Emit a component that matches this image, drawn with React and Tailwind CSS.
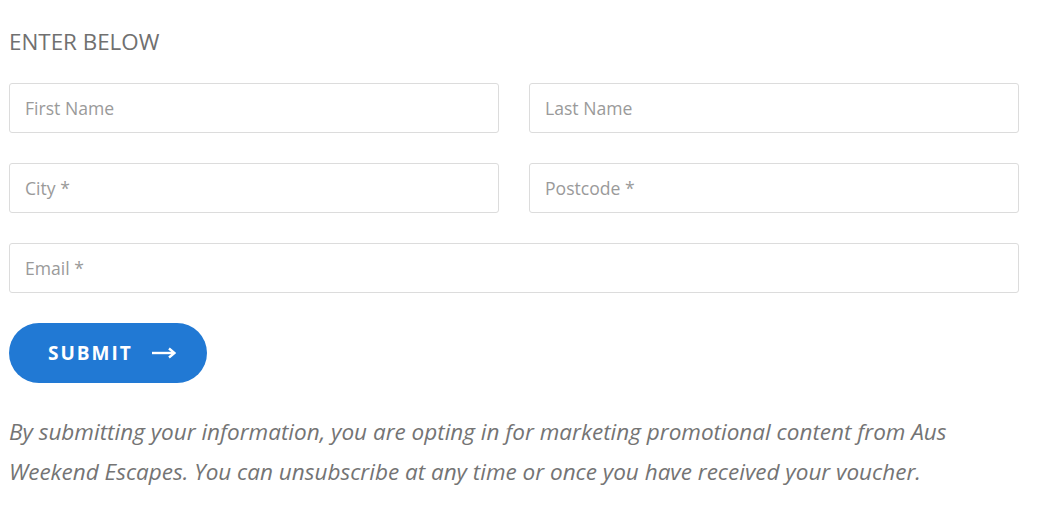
import React from "react";

export default function App() {
  const inputCls =
    "h-[50px] w-full rounded-[3px] border border-[#dcdcdc] bg-white px-[15px] text-[17.6px] text-[#555] placeholder-[#9a9a9a] outline-none";
  return (
    <div
      className="min-h-[507px] w-[1044px] bg-white pl-[9px] pr-[25px] pt-[27px]"
      style={{ fontFamily: '"Open Sans", sans-serif' }}
    >
      <h2 className="text-[22.4px] leading-[30px] font-normal text-[#707070]">ENTER BELOW</h2>
      <div className="mt-[26px] grid grid-cols-2 gap-x-[30px] gap-y-[30px]">
        <input className={inputCls} placeholder="First Name" />
        <input className={inputCls} placeholder="Last Name" />
        <input className={inputCls} placeholder="City *" />
        <input className={inputCls} placeholder="Postcode *" />
        <input className={`${inputCls} col-span-2`} placeholder="Email *" />
      </div>
      <button className="mt-[30px] flex h-[60px] w-[198px] items-center rounded-full bg-[#2179d4] pl-[39px] text-[19px] font-bold tracking-[2px] text-white">
        SUBMIT
        <svg className="ml-[19px]" width="24" height="12" viewBox="0 0 24 12" fill="none">
          <path d="M0 6H22" stroke="white" strokeWidth="2.4" />
          <path d="M17 1.5L22.5 6L17 10.5" stroke="white" strokeWidth="2.4" fill="none" />
        </svg>
      </button>
      <p className="mt-[29px] text-[22.5px] leading-[40px] italic text-[#747474]">
        By submitting your information, you are opting in for marketing promotional content from Aus Weekend Escapes. You can unsubscribe at any time or once you have received your voucher.
      </p>
    </div>
  );
}
